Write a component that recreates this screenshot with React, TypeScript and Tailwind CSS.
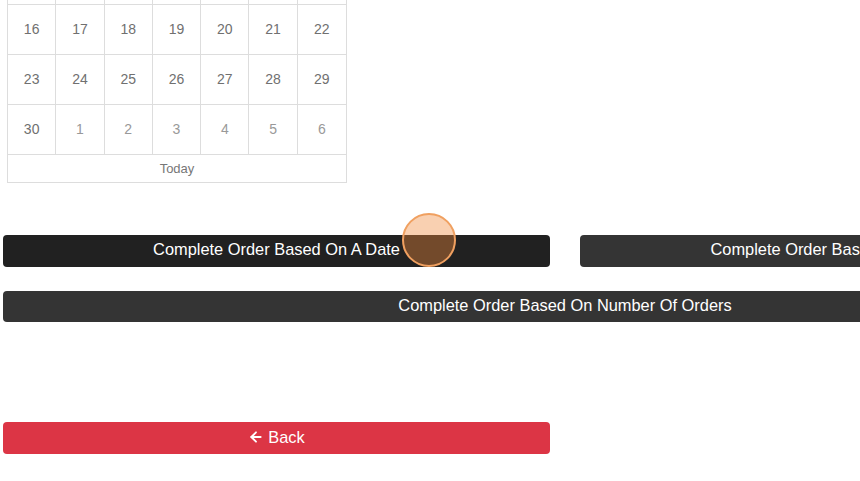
import { ArrowLeft } from "lucide-react";

const weeks: { day: number; muted?: boolean }[][] = [
  [9, 10, 11, 12, 13, 14, 15].map((day) => ({ day })),
  [16, 17, 18, 19, 20, 21, 22].map((day) => ({ day })),
  [23, 24, 25, 26, 27, 28, 29].map((day) => ({ day })),
  [{ day: 30 }, ...[1, 2, 3, 4, 5, 6].map((day) => ({ day, muted: true }))]
];

function Calendar() {
  return (
    <div className="ml-[7px] mt-[-46px] w-[340px] border-l border-r border-b border-[#dddddd] text-[14px] text-[#707070]">
      {weeks.map((week, i) => (
        <div key={i} className="grid grid-cols-7 border-t border-[#dddddd]">
          {week.map((cell, j) => (
            <div
              key={j}
              className={
                "flex h-[49px] items-center justify-center " +
                (j < 6 ? "border-r border-[#dddddd] " : "") +
                (cell.muted ? "text-[#999999]" : "")
              }
            >
              {cell.day}
            </div>
          ))}
        </div>
      ))}
      <div className="flex h-[28px] items-center justify-center border-t border-[#dddddd] text-[13px] text-[#777777]">
        Today
      </div>
    </div>
  );
}

export default function App() {
  return (
    <div
      className="relative h-[481px] w-[860px] overflow-hidden bg-white"
      style={{ fontFamily: '"Liberation Sans", Arial, sans-serif' }}
    >
      <Calendar />

      <div className="mt-[52px] flex w-[1130px] flex-col gap-6 pl-[3px] text-[16.4px] text-white">
        <div className="flex gap-[30px]">
          <button className="h-8 w-[547px] rounded bg-[#212121] pb-[3px]">
            Complete Order Based On A Date
          </button>
          <button className="h-8 w-[547px] rounded bg-[#343434] pb-[3px]">
            Complete Order Based On Date Range
          </button>
        </div>
        <button className="h-[31px] w-[1124px] rounded bg-[#343434] pb-[2px]">
          Complete Order Based On Number Of Orders
        </button>
        <button className="mt-[76px] flex h-8 w-[547px] items-center justify-center gap-1 rounded bg-[#dc3545] pb-[2px]">
          <ArrowLeft size={16} strokeWidth={2.75} />
          Back
        </button>
      </div>

      <div className="pointer-events-none absolute left-[402px] top-[213px] h-[54px] w-[54px] rounded-full border-2 border-[#f0a060] bg-[#f08a3c]/40" />
    </div>
  );
}
